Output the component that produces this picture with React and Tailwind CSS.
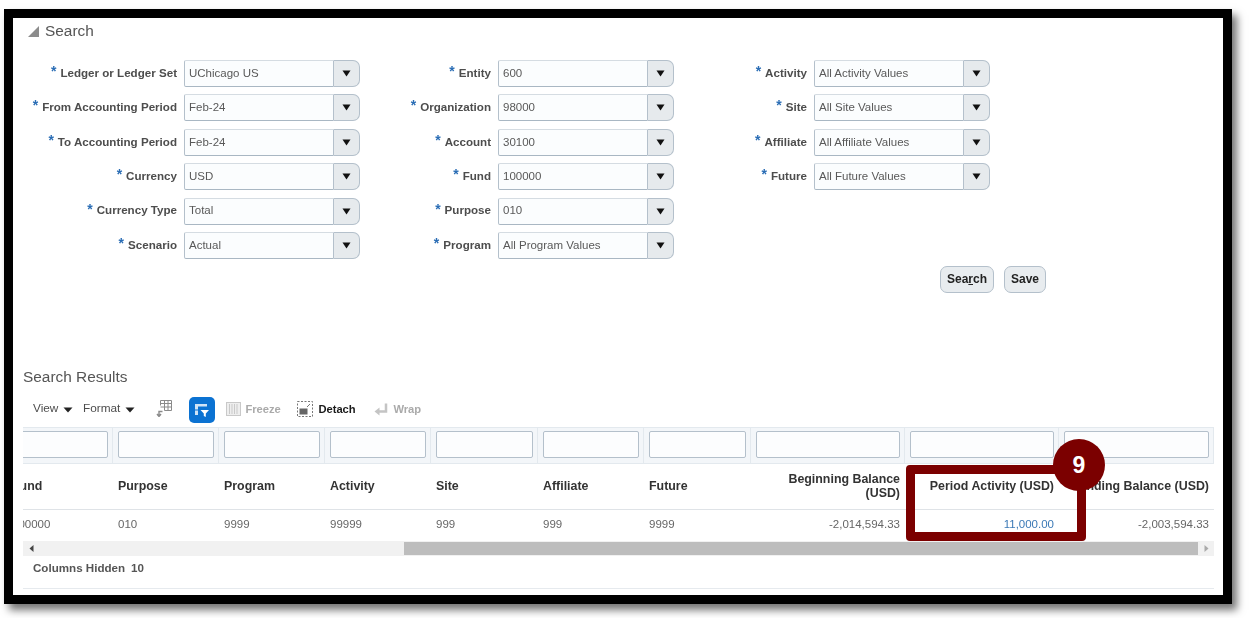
const col1 = [
  ["Ledger or Ledger Set", "UChicago US"],
  ["From Accounting Period", "Feb-24"],
  ["To Accounting Period", "Feb-24"],
  ["Currency", "USD"],
  ["Currency Type", "Total"],
  ["Scenario", "Actual"],
];
const col2 = [
  ["Entity", "600"],
  ["Organization", "98000"],
  ["Account", "30100"],
  ["Fund", "100000"],
  ["Purpose", "010"],
  ["Program", "All Program Values"],
];
const col3 = [
  ["Activity", "All Activity Values"],
  ["Site", "All Site Values"],
  ["Affiliate", "All Affiliate Values"],
  ["Future", "All Future Values"],
];

const columns = [
  { name: "Fund", value: "100000", width: "w-[106px]" },
  { name: "Purpose", value: "010", width: "w-[106px]" },
  { name: "Program", value: "9999", width: "w-[106px]" },
  { name: "Activity", value: "99999", width: "w-[106px]" },
  { name: "Site", value: "999", width: "w-[107px]" },
  { name: "Affiliate", value: "999", width: "w-[106px]" },
  { name: "Future", value: "9999", width: "w-[107px]" },
  { name: "Beginning Balance (USD)", value: "-2,014,594.33", width: "w-[154px]", right: true },
  { name: "Period Activity (USD)", value: "11,000.00", width: "w-[154px]", right: true, link: true },
  { name: "Ending Balance (USD)", value: "-2,003,594.33", width: "w-[155px]", right: true },
];

function Field({ label, value }) {
  return (
    <div className="flex items-center h-[27px]">
      <div className="flex-1 flex justify-end items-center pr-[7px] pb-[2px] text-[11.6px] font-bold text-[#4d4d4d] whitespace-nowrap">
        <span className="text-[#2a6db5] text-[14px] leading-none mr-[4px] -mt-[3px]">*</span>
        {label}
      </div>
      <div className="w-[150px] h-[27px] flex items-center pl-[4px] bg-[#fbfdfe] border border-[#b4c0cb] border-t-[#d5dce2] border-b-[#a9b7c3] rounded-l-[2px] text-[11.5px] text-[#595959]">
        {value}
      </div>
      <div className="w-[26px] h-[27px] flex items-center justify-center bg-[#e6eaed] border border-l-0 border-[#b4c0cb] rounded-r-[7px]">
        <svg width="9" height="7" viewBox="0 0 9 7">
          <path d="M0.5 0.5h8L4.5 6.5z" fill="#111" />
        </svg>
      </div>
    </div>
  );
}

function FieldColumn({ rows, width }) {
  return (
    <div className={`${width} flex flex-col gap-[7.4px]`}>
      {rows.map((r) => (
        <Field key={r[0]} label={r[0]} value={r[1]} />
      ))}
    </div>
  );
}

function MenuItem({ label, className }) {
  return (
    <div className={`flex items-center text-[11.8px] text-[#4d4d4d] ${className}`}>
      {label}
      <svg className="ml-[5px] mt-[2px]" width="10" height="6" viewBox="0 0 10 6">
        <path d="M0.5 0.5h9L5 5.5z" fill="#222" />
      </svg>
    </div>
  );
}

function Toolbar() {
  return (
    <div className="flex items-center h-[26px] mt-[10px] pl-[20px] pb-[2px]">
      <MenuItem label="View" className="w-[50px]" />
      <MenuItem label="Format" />
      {/* columns icon */}
      <svg className="ml-[21px]" width="16" height="17" viewBox="0 0 16 17" fill="none" stroke="#8a8a8a">
        <path d="M4.5 0.5h11v10h-7M4.5 0.5v5M8.5 0.5v10M12 0.5v10M4.5 3.5h11M4.5 7h11" />
        <path d="M6.5 11.5H3v5M1 14l2 2.5L5 14" strokeWidth="1.4" />
      </svg>
      <div className="ml-[17px] w-[26px] h-[26px] mt-[2px] rounded-[5px] bg-[#0b72d2] flex items-center justify-center">
        <svg width="18" height="18" viewBox="0 0 18 18" fill="none">
          <path d="M2 3h12v3H5v8H2z" fill="#cfe3f6" />
          <path d="M5 6h9M2 9h3" stroke="#0b72d2" />
          <path d="M7.5 9H16l-3.2 3.5V16l-2-1v-2.5z" fill="#fff" />
        </svg>
      </div>
      <svg className="ml-[11px]" width="15" height="14" viewBox="0 0 15 14" fill="none" stroke="#c9c9c9">
        <rect x="0.5" y="0.5" width="14" height="13" fill="#eee" />
        <path d="M3.5 2v10M6 2v10M8.5 2v10M11 2v10" />
      </svg>
      <span className="ml-[4px] w-[52px] text-[11.2px] font-bold text-[#aaaaaa]">Freeze</span>
      <svg width="16" height="16" viewBox="0 0 16 16" fill="none">
        <rect x="0.5" y="0.5" width="15" height="15" stroke="#777" strokeDasharray="2 1.5" />
        <rect x="2.5" y="7.5" width="8" height="6" fill="#666" />
        <path d="M10 6l3-3" stroke="#777" />
      </svg>
      <span className="ml-[5px] w-[56px] text-[11.2px] font-bold text-[#1a1a1a]">Detach</span>
      <svg width="14" height="14" viewBox="0 0 14 14" fill="none">
        <path d="M12 1.5v8H4" stroke="#c4c4c4" strokeWidth="2.5" />
        <path d="M5.5 5.5v8L0.5 9.5z" fill="#c4c4c4" />
      </svg>
      <span className="ml-[5px] text-[11.2px] font-bold text-[#aaaaaa]">Wrap</span>
    </div>
  );
}

function ResultsTable() {
  return (
    <div className="ml-[10px] w-[1191px] overflow-hidden mt-[4px]">
      <div className="-ml-[16px] w-[1207px]">
        {/* filter row */}
        <div className="flex h-[37px] bg-[#f3f6f9] border-t border-b border-[#e3e9ee]">
          {columns.map((c) => (
            <div key={c.name} className={`${c.width} pl-[5px] pr-[4px] pt-[3px] border-r border-[#e3e9ee]`}>
              <div className="h-[27px] bg-[#fcfdfe] border border-[#b4c0cb] rounded-[2px]"></div>
            </div>
          ))}
        </div>
        {/* header */}
        <div className="flex h-[46px] border-b border-[#dfe3e7]">
          {columns.map((c) => (
            <div
              key={c.name}
              className={`${c.width} px-[5px] flex items-center text-[12.4px] leading-[14px] font-bold text-[#333] ${c.right ? "justify-end text-right" : ""}`}
            >
              <span className={c.name.startsWith("Beginning") ? "w-[120px]" : ""}>{c.name}</span>
            </div>
          ))}
        </div>
        {/* data row */}
        <div className="flex h-[31px] pb-[2px]">
          {columns.map((c) => (
            <div
              key={c.name}
              className={`${c.width} px-[5px] flex items-center text-[11.5px] ${c.right ? "justify-end" : ""} ${c.link ? "text-[#3b79b6]" : "text-[#666]"}`}
            >
              {c.value}
            </div>
          ))}
        </div>
      </div>
      {/* scrollbar */}
      <div className="h-[15px] bg-[#f1f1f1] flex items-center">
        <svg className="ml-[6px]" width="5" height="7" viewBox="0 0 5 7">
          <path d="M4.5 0v7L0.5 3.5z" fill="#444" />
        </svg>
        <div className="ml-[370px] w-[794px] h-[13px] bg-[#bdbdbd]"></div>
        <svg className="ml-[6px]" width="5" height="7" viewBox="0 0 5 7">
          <path d="M0.5 0v7l4-3.5z" fill="#aaa" />
        </svg>
      </div>
    </div>
  );
}

export default function App() {
  return (
    <div className="w-[1251px] h-[618px] bg-white overflow-hidden pt-[9px] pl-[4px] font-['Liberation_Sans',Arial,sans-serif]">
      <div className="relative w-[1228px] h-[595px] bg-white border-[9px] border-black shadow-[5px_6px_8px_rgba(0,0,0,0.55)] blur-[0.35px]">
        {/* Search panel */}
        <div className="flex items-center h-[26px] pl-[15px]">
          <svg width="11" height="11" viewBox="0 0 11 11">
            <path d="M11 0v11H0z" fill="#8c8c8c" />
          </svg>
          <span className="ml-[6px] text-[15.4px] text-[#555]">Search</span>
        </div>

        <div className="flex mt-[16px]">
          <FieldColumn rows={col1} width="w-[347px]" />
          <FieldColumn rows={col2} width="w-[314px]" />
          <FieldColumn rows={col3} width="w-[316px]" />
        </div>

        <div className="flex mt-[7px] pl-[927px]">
          <button className="w-[54px] h-[27px] bg-[#e8ecef] border border-[#b4c0cb] rounded-[7px] text-[12px] font-bold text-[#222]">
            Sea<span className="underline">r</span>ch
          </button>
          <button className="ml-[10px] w-[42px] h-[27px] bg-[#e8ecef] border border-[#b4c0cb] rounded-[7px] text-[12px] font-bold text-[#222]">
            Save
          </button>
        </div>

        {/* Search Results */}
        <div className="mt-[74px] pl-[10px] h-[20px] flex items-center text-[15.4px] text-[#555]">
          Search Results
        </div>
        <Toolbar />
        <ResultsTable />

        <div className="mt-[4px] ml-[20px] h-[16px] flex items-center text-[11.6px] font-bold text-[#555]">
          Columns Hidden<span className="ml-[6px]">10</span>
        </div>
        <div className="mt-[12px] ml-[10px] w-[1191px] border-t border-[#e6eaee]"></div>

        {/* callout */}
        <div className="absolute left-[893px] top-[447px] w-[180px] h-[76px] border-[9px] border-[#7b0000] rounded-[4px]"></div>
        <div className="absolute left-[1040px] top-[421px] w-[52px] h-[52px] rounded-full bg-[#7b0000] flex items-center justify-center text-white text-[23px] font-bold">
          9
        </div>
      </div>
    </div>
  );
}
